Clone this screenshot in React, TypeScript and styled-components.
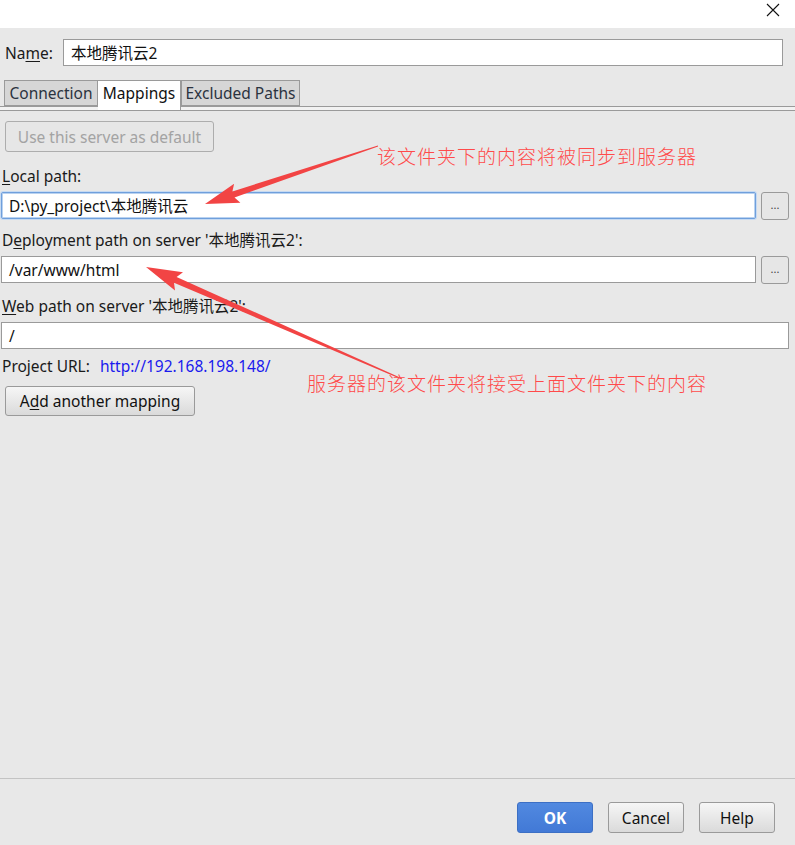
import React from "react";
import styled, { createGlobalStyle } from "styled-components";

const Global = createGlobalStyle`
  html, body { margin: 0; padding: 0; }
  body {
    background: #e8e8e8;
    font-family: "Noto Sans", "Noto Sans CJK SC", sans-serif;
    font-size: 15.5px;
    color: #1a1a1a;
  }
`;

const Frame = styled.div`
  position: relative;
  width: 795px;
  height: 845px;
  display: flex;
  flex-direction: column;
  background: #e8e8e8;
  overflow: hidden;
`;

const TitleBar = styled.div`
  height: 28px;
  background: #ffffff;
  display: flex;
  justify-content: flex-end;
  align-items: flex-start;
  padding-right: 14px;
  box-sizing: border-box;
`;

const CloseBtn = styled.div`
  width: 16px;
  height: 16px;
  margin-top: 2px;
  display: flex;
  align-items: center;
  justify-content: center;
`;

const Body = styled.div`
  flex: 1;
  display: flex;
  flex-direction: column;
`;

const NameRow = styled.div`
  display: flex;
  align-items: center;
  margin-top: 11px;
  padding-left: 4px;
  padding-right: 12px;
  gap: 10px;
`;

const Label = styled.div<{ $mt?: number }>`
  line-height: 20px;
  height: 20px;
  white-space: nowrap;
  margin-top: ${(p) => p.$mt ?? 0}px;
  padding-left: 1px;
`;

const U = styled.span`
  text-decoration: underline;
  text-underline-offset: 2px;
`;

const TextBox = styled.div<{ $focus?: boolean }>`
  flex: 1;
  height: 27px;
  box-sizing: border-box;
  background: #ffffff;
  border: 1px solid ${(p) => (p.$focus ? "#6f9fdc" : "#9a9a9a")};
  box-shadow: ${(p) => (p.$focus ? "inset 0 0 0 1px #b9d2f0, 0 0 0 1px #c6daf2" : "none")};
  border-radius: ${(p) => (p.$focus ? "2px" : "0")};
  display: flex;
  align-items: center;
  padding-left: 7px;
  font-size: 15.5px;
  color: #111;
  white-space: nowrap;
`;

const Tabs = styled.div`
  display: flex;
  margin-top: 14px;
  padding-left: 4px;
  border-bottom: 1px solid #9a9a9a;
  height: 26px;
`;

const Tab = styled.div<{ $active?: boolean; $w: number }>`
  width: ${(p) => p.$w}px;
  height: ${(p) => (p.$active ? 30 : 26)}px;
  box-sizing: border-box;
  border: 1px solid #9a9a9a;
  border-left: ${(p) => (p.$active ? "none" : "1px solid #9a9a9a")};
  border-bottom: ${(p) => (p.$active ? "none" : "1px solid #9a9a9a")};
  background: ${(p) => (p.$active ? "#ffffff" : "#d6d6d6")};
  color: ${(p) => (p.$active ? "#111" : "#2b3340")};
  display: flex;
  justify-content: center;
  padding-top: 1px;
  line-height: 22px;
  font-size: 15.5px;
  white-space: nowrap;
  position: relative;
  z-index: 1;
`;

const TabStripGap = styled.div`
  height: 3px;
  background: #f2f2f2;
  border-bottom: 1px solid #9a9a9a;
`;

const Panel = styled.div`
  display: flex;
  flex-direction: column;
  padding: 10px 6px 0 1px;
`;

const Button = styled.div<{ $w: number; $h: number; $disabled?: boolean; $primary?: boolean }>`
  width: ${(p) => p.$w}px;
  height: ${(p) => p.$h}px;
  box-sizing: border-box;
  border-radius: 3px;
  border: 1px solid ${(p) => (p.$primary ? "#3c6fc4" : p.$disabled ? "#adadad" : "#9a9a9a")};
  background: ${(p) =>
    p.$primary
      ? "linear-gradient(#5189e0, #4279d6)"
      : p.$disabled
      ? "#e6e6e6"
      : "linear-gradient(#f6f6f6, #dadada)"};
  color: ${(p) => (p.$primary ? "#ffffff" : p.$disabled ? "#a3a3a3" : "#111")};
  font-weight: ${(p) => (p.$primary ? 700 : 400)};
  display: flex;
  align-items: center;
  justify-content: center;
  font-size: 15.5px;
  white-space: nowrap;
`;

const DefaultBtnWrap = styled.div`
  padding-left: 4px;
`;

const FieldRow = styled.div`
  display: flex;
  align-items: flex-start;
  gap: 5px;
  margin-top: 6px;
  height: 28px;
`;

const Browse = styled.div`
  width: 28px;
  height: 28px;
  box-sizing: border-box;
  border: 1px solid #9a9a9a;
  border-radius: 3px;
  background: #e6e6e6;
  display: flex;
  align-items: center;
  justify-content: center;
  font-size: 11px;
  color: #444;
  padding-bottom: 4px;
`;

const WideField = styled.div`
  display: flex;
  margin-top: 6px;
`;

const UrlRow = styled.div`
  display: flex;
  gap: 10px;
  margin-top: 7px;
  line-height: 20px;
  padding-left: 1px;
`;

const Link = styled.span`
  color: #1a1aee;
`;

const AddWrap = styled.div`
  margin-top: 10px;
  padding-left: 4px;
`;

const Footer = styled.div`
  height: 67px;
  box-sizing: border-box;
  border-top: 1px solid #c3c3c3;
  display: flex;
  justify-content: flex-end;
  gap: 15px;
  padding: 23px 20px 0 0;
`;

const Overlay = styled.svg`
  position: absolute;
  left: 0;
  top: 0;
  pointer-events: none;
`;

const Note = styled.div<{ $x: number; $y: number }>`
  position: absolute;
  left: ${(p) => p.$x}px;
  top: ${(p) => p.$y}px;
  color: #ff4a4a;
  font-family: "Noto Sans CJK SC", sans-serif;
  font-size: 19px;
  letter-spacing: 1px;
  line-height: 22px;
  white-space: nowrap;
  font-weight: 300;
  pointer-events: none;
`;

type P = [number, number];

function arrowPoints(tail: P, tip: P, headLen: number, headHalf: number, sTail: number, sHead: number) {
  const dx = tip[0] - tail[0];
  const dy = tip[1] - tail[1];
  const len = Math.hypot(dx, dy);
  const ux = dx / len;
  const uy = dy / len;
  const nx = -uy;
  const ny = ux;
  const bx = tip[0] - ux * headLen;
  const by = tip[1] - uy * headLen;
  const wx = bx - ux * 4;
  const wy = by - uy * 4;
  const pts: P[] = [
    [tail[0] + nx * sTail, tail[1] + ny * sTail],
    [bx + nx * sHead, by + ny * sHead],
    [wx + nx * headHalf, wy + ny * headHalf],
    tip,
    [wx - nx * headHalf, wy - ny * headHalf],
    [bx - nx * sHead, by - ny * sHead],
    [tail[0] - nx * sTail, tail[1] - ny * sTail],
  ];
  return pts.map((p) => `${p[0].toFixed(1)},${p[1].toFixed(1)}`).join(" ");
}

export default function App() {
  return (
    <>
      <Global />
      <Frame>
        <TitleBar>
          <CloseBtn>
            <svg width="14" height="14" viewBox="0 0 14 14">
              <path d="M1 1 L13 13 M13 1 L1 13" stroke="#111" strokeWidth="1.1" fill="none" />
            </svg>
          </CloseBtn>
        </TitleBar>
        <Body>
          <NameRow>
            <Label>
              Na<U>m</U>e:
            </Label>
            <TextBox>本地腾讯云2</TextBox>
          </NameRow>
          <Tabs>
            <Tab $w={94}>Connection</Tab>
            <Tab $w={83} $active>
              Mappings
            </Tab>
            <Tab $w={119}>Excluded Paths</Tab>
          </Tabs>
          <TabStripGap />
          <Panel>
            <DefaultBtnWrap>
              <Button $w={209} $h={31} $disabled>
                Use this server as default
              </Button>
            </DefaultBtnWrap>
            <Label $mt={14}>
              <U>L</U>ocal path:
            </Label>
            <FieldRow>
              <TextBox $focus>D:\py_project\本地腾讯云</TextBox>
              <Browse>...</Browse>
            </FieldRow>
            <Label $mt={10}>
              D<U>e</U>ployment path on server '本地腾讯云2':
            </Label>
            <FieldRow>
              <TextBox>/var/www/html</TextBox>
              <Browse>...</Browse>
            </FieldRow>
            <Label $mt={12}>
              <U>W</U>eb path on server '本地腾讯云2':
            </Label>
            <WideField>
              <TextBox>/</TextBox>
            </WideField>
            <UrlRow>
              <span>Project URL:</span>
              <Link>http://192.168.198.148/</Link>
            </UrlRow>
            <AddWrap>
              <Button $w={190} $h={30}>
                A<U>d</U>d another mapping
              </Button>
            </AddWrap>
          </Panel>
        </Body>
        <Footer>
          <Button $w={76} $h={31} $primary>
            OK
          </Button>
          <Button $w={76} $h={31}>
            Cancel
          </Button>
          <Button $w={76} $h={31}>
            Help
          </Button>
        </Footer>
        <Overlay width="795" height="845" viewBox="0 0 795 845">
          <polygon points={arrowPoints([378, 146], [205, 204], 30, 10, 0.4, 3.2)} fill="#f24444" />
          <polygon points={arrowPoints([402, 379], [146, 267], 32, 10, 0.6, 3.2)} fill="#f24444" />
        </Overlay>
        <Note $x={377} $y={145}>该文件夹下的内容将被同步到服务器</Note>
        <Note $x={307} $y={372}>服务器的该文件夹将接受上面文件夹下的内容</Note>
      </Frame>
    </>
  );
}
